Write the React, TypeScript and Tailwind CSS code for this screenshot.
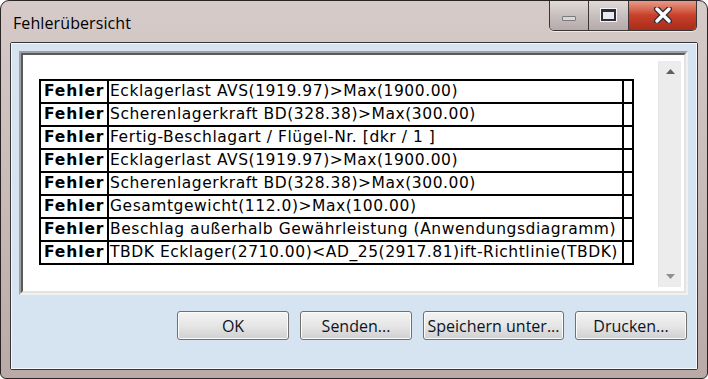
import React from "react";

const rows = [
  "Ecklagerlast AVS(1919.97)>Max(1900.00)",
  "Scherenlagerkraft BD(328.38)>Max(300.00)",
  "Fertig-Beschlagart / Flügel-Nr. [dkr / 1 ]",
  "Ecklagerlast AVS(1919.97)>Max(1900.00)",
  "Scherenlagerkraft BD(328.38)>Max(300.00)",
  "Gesamtgewicht(112.0)>Max(100.00)",
  "Beschlag außerhalb Gewährleistung (Anwendungsdiagramm)",
  "TBDK Ecklager(2710.00)<AD_25(2917.81)ift-Richtlinie(TBDK)",
];

function Btn({ label, w }: { label: string; w: string }) {
  return (
    <div
      className={`${w} h-[29px] rounded-[3px] border border-[#707070] bg-gradient-to-b from-[#f3f3f3] via-[#e6e6e6] to-[#d0d0d0] shadow-[inset_0_0_0_1px_#fcfcfc] flex items-center justify-center text-[16px] text-[#0b1426]`}
      style={{ fontFamily: '"Open Sans", "Noto Sans", sans-serif' }}
    >
      {label}
    </div>
  );
}

export default function App() {
  return (
    <div
      className="w-[708px] h-[379px] rounded-t-[9px] rounded-b-[6px] border border-[#2a2424] bg-gradient-to-b from-[#d6cbc9] via-[#c8bbb8] to-[#b9aaa7] flex flex-col overflow-hidden"
      style={{ fontFamily: '"Open Sans", "Noto Sans", sans-serif' }}
    >
      {/* title bar */}
      <div className="h-[41px] flex items-start justify-between pl-[12px] pr-[10px] shrink-0">
        <span className="mt-[10px] text-[16px] text-black tracking-[0.1px]">Fehlerübersicht</span>
        <div className="flex h-[31px] -mt-[1px] rounded-b-[5px] border border-[#3b3535] border-t-0 overflow-hidden shadow-[0_1px_0_#efe9e8]">
          <div className="w-[39px] h-full bg-gradient-to-b from-[#e2dcdb] via-[#c9c1c0] to-[#b3aaa9] border-r border-[#3b3535] flex items-center justify-center">
            <div className="w-[14px] h-[5px] mt-[6px] bg-[#d8d8d8] border border-[#7a7a7a] rounded-[1px]" />
          </div>
          <div className="w-[40px] h-full bg-gradient-to-b from-[#e2dcdb] via-[#c9c1c0] to-[#b3aaa9] border-r border-[#3b3535] flex items-center justify-center">
            <div className="w-[15px] h-[12px] border-[2px] border-t-[3px] border-[#2c2c3a] bg-[#e9eaf1] shadow-[0_0_0_1px_#f5f5f5]" />
          </div>
          <div className="w-[67px] h-full bg-gradient-to-b from-[#e8a08e] via-[#c9412b] to-[#a82c1a] flex items-center justify-center">
            <svg width="20" height="16" viewBox="0 0 20 16">
              <path d="M4 2 L16 14 M16 2 L4 14" stroke="#2b2b3a" strokeWidth="6" strokeLinecap="round" />
              <path d="M4 2 L16 14 M16 2 L4 14" stroke="#ffffff" strokeWidth="3.4" strokeLinecap="round" />
            </svg>
          </div>
        </div>
      </div>

      {/* client area */}
      <div className="mx-[9px] mb-[8px] flex-1 border border-[#3a3434] rounded-[2px]">
        <div className="h-full border border-[#f4f7fb] bg-[#d6e4f2] pt-[7px] pl-[7px] pr-[8px] flex flex-col">
          {/* sunken panel */}
          <div className="h-[244px] border-[2px] border-t-[#a0a0a0] border-l-[#a0a0a0] border-r-[#f0f0f0] border-b-[#f0f0f0]">
            <div className="h-full border-[2px] border-t-[#5a5a5a] border-l-[#5a5a5a] border-r-[#e3e3e3] border-b-[#e3e3e3] bg-white flex">
              <div className="flex-1 pl-[16px] pt-[24px]">
                <table
                  className="border-collapse table-fixed text-black text-[15.5px] tracking-[0.55px]"
                  style={{ fontFamily: '"DejaVu Sans", Verdana, sans-serif' }}
                >
                  <tbody>
                    {rows.map((r, i) => (
                      <tr key={i} className="h-[23px]">
                        <td className="w-[68px] border-2 border-black pl-[3px] pr-[1px] font-bold leading-none whitespace-nowrap tracking-[0.9px]">Fehler</td>
                        <td className="w-[515px] border-2 border-black px-[1px] leading-none whitespace-nowrap">{r}</td>
                        <td className="w-[10px] border-2 border-black" />
                      </tr>
                    ))}
                  </tbody>
                </table>
              </div>
              <div className="w-[23px] mt-[6px] mb-[4px] mr-[3px] bg-[#ececec] border-l border-[#e4e4e4] flex flex-col items-center justify-between py-[8px]">
                <svg width="9" height="5" viewBox="0 0 9 5"><path d="M0 5 L4.5 0 L9 5 Z" fill="#5f5f5f" /></svg>
                <svg width="9" height="5" viewBox="0 0 9 5"><path d="M0 0 L4.5 5 L9 0 Z" fill="#909090" /></svg>
              </div>
            </div>
          </div>

          {/* buttons */}
          <div className="flex justify-end gap-[11px] mt-[16px] pr-[1px]">
            <Btn label="OK" w="w-[112px]" />
            <Btn label="Senden..." w="w-[112px]" />
            <Btn label="Speichern unter..." w="w-[141px]" />
            <Btn label="Drucken..." w="w-[112px]" />
          </div>
        </div>
      </div>
    </div>
  );
}
